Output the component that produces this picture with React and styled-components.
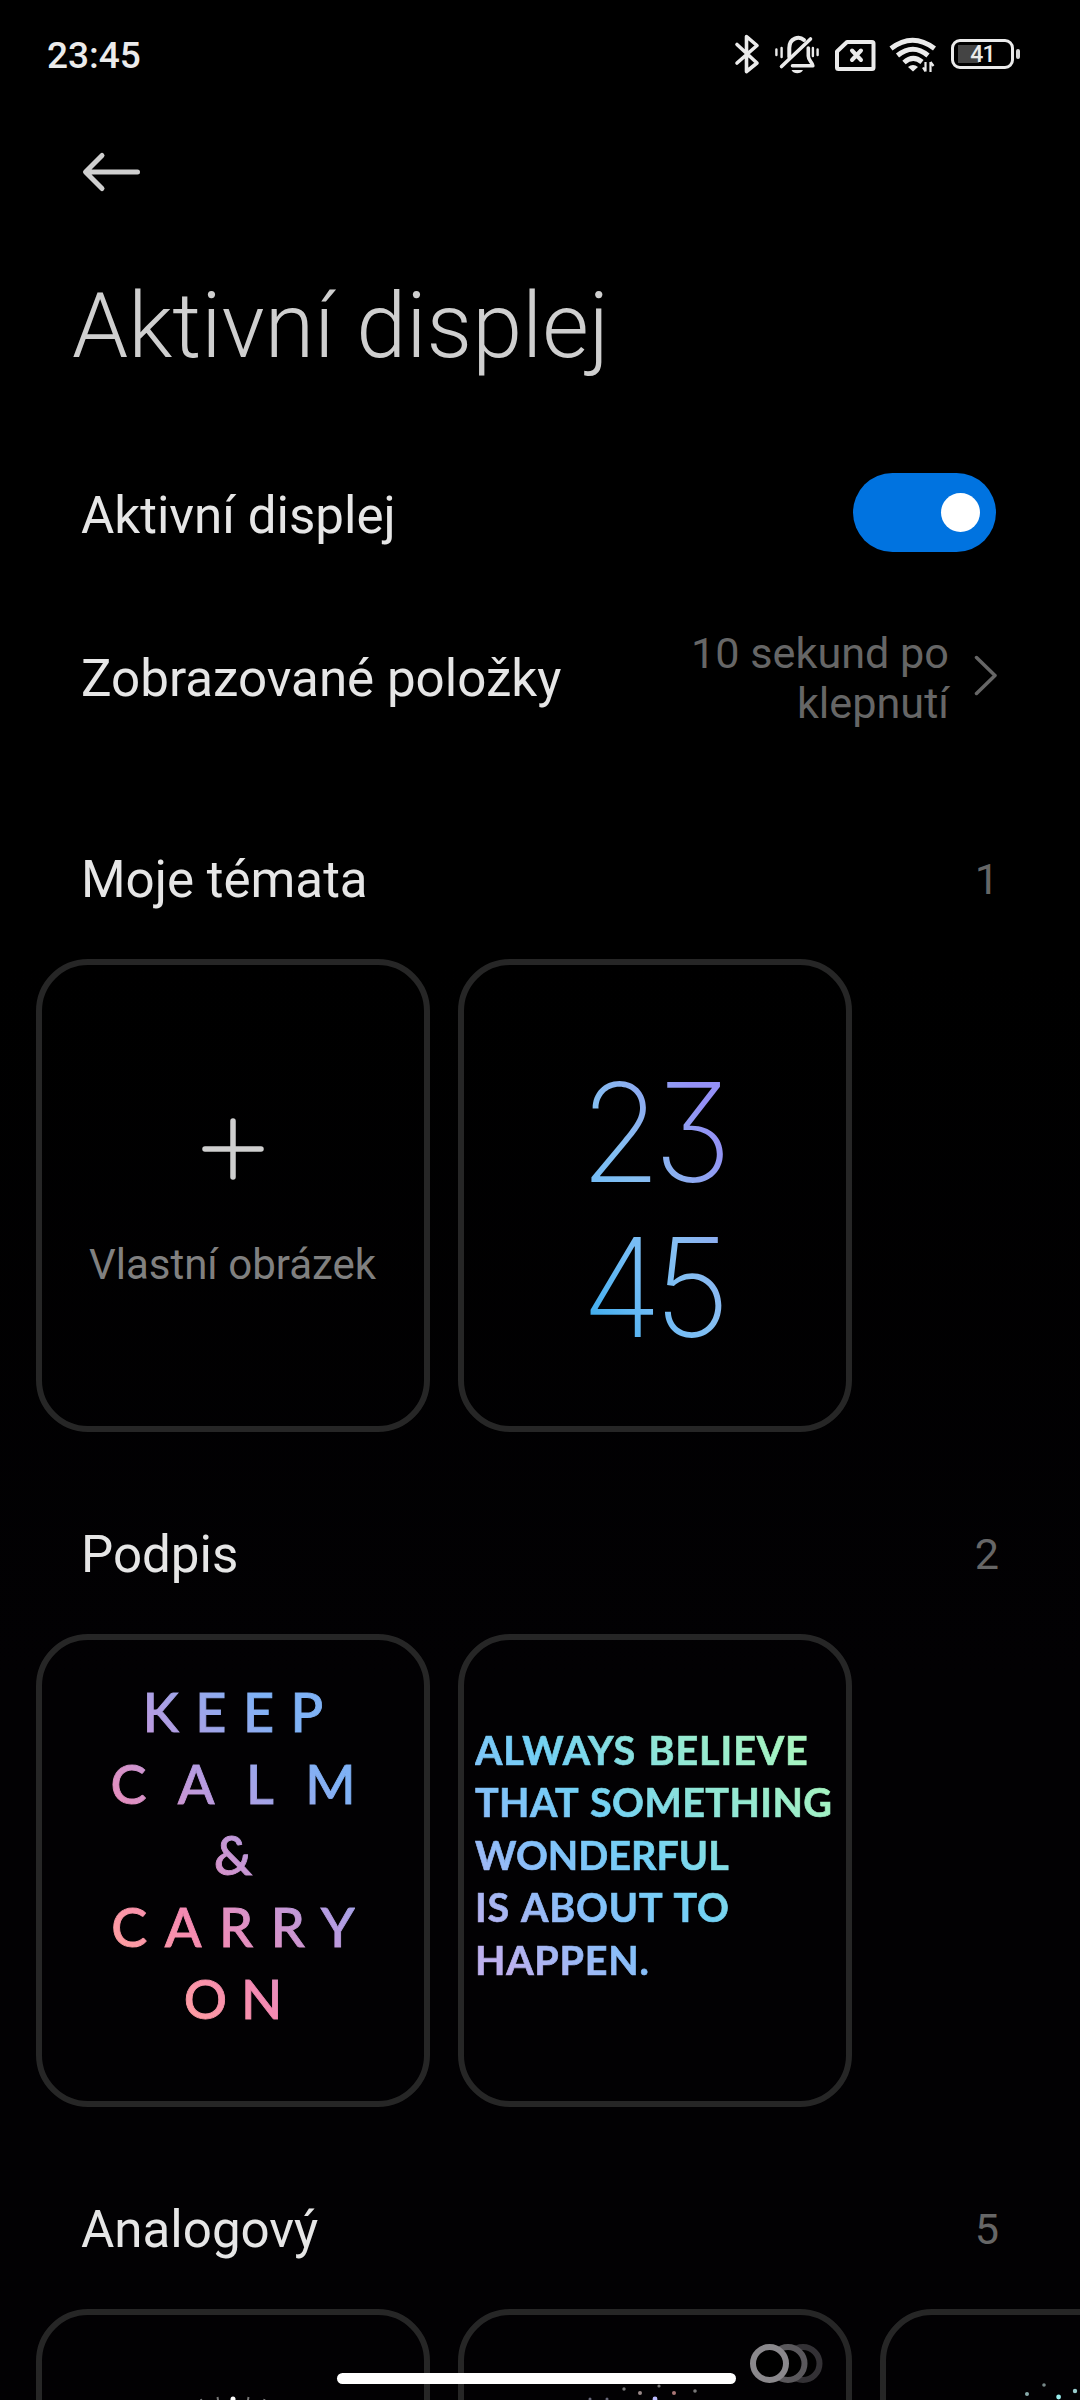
import React from 'react';
import styled, { createGlobalStyle, css } from 'styled-components';

const GlobalStyle = createGlobalStyle`
  body {
    margin: 0;
    background: #000;
    font-family: Roboto, 'Liberation Sans', sans-serif;
  }
`;

const Screen = styled.div`
  position: relative;
  width: 1080px;
  height: 2400px;
  overflow: hidden;
  background: linear-gradient(#000 40%, #020103 70%);
  color: #e6e6e6;
`;

const StatusBar = styled.div`
  display: flex;
  align-items: center;
  justify-content: space-between;
  height: 108px;
  padding: 0 60px 0 47px;
  box-sizing: border-box;
`;

const Clock = styled.div`
  padding-top: 3px;
  font-size: 37px;
  font-weight: 500;
  color: #ebebeb;
`;

const StatusIcons = styled.div`
  display: flex;
  align-items: center;

  svg {
    display: block;
  }
`;

const Battery = styled.div`
  display: flex;
  align-items: center;
  margin-left: 15px;
`;

const BatteryBody = styled.div`
  display: flex;
  align-items: center;
  justify-content: center;
  width: 63px;
  height: 30px;
  box-sizing: border-box;
  border: 3px solid #ebebeb;
  border-radius: 9px;
  background: linear-gradient(#444, #444) 4px 3px / 21px 18px no-repeat;
  color: #ebebeb;
  font-size: 23px;
  font-weight: 500;
  letter-spacing: -0.8px;
  line-height: 26px;
  padding-top: 2px;
`;

const BatteryTip = styled.div`
  width: 4px;
  height: 10px;
  margin-left: 2px;
  border-radius: 2px;
  background: #d8d8d8;
`;

const NavBar = styled.div`
  display: flex;
  align-items: center;
  height: 128px;
  padding-left: 80px;
`;

const Title = styled.h1`
  margin: 0;
  padding-left: 72px;
  font-size: 90px;
  font-weight: 300;
  line-height: 182px;
  color: #cfcfcf;
`;

const Row = styled.div`
  display: flex;
  align-items: center;
  justify-content: space-between;
  height: ${props => props.height}px;
  padding: 0 ${props => props.end || 84}px 0 81px;
`;

const Label = styled.div`
  font-size: 51.1px;
  line-height: 60px;
  padding-top: ${props => props.drop || 1}px;
`;

const Switch = styled.div`
  display: flex;
  align-items: center;
  justify-content: flex-end;
  width: 143px;
  height: 79px;
  padding-right: 16px;
  box-sizing: border-box;
  border-radius: 40px;
  background: #0073e0;
`;

const Knob = styled.div`
  width: 39px;
  height: 39px;
  border-radius: 50%;
  background: #fff;
`;

const Value = styled.div`
  display: flex;
  align-items: center;
  gap: 22px;
  color: #666;
  font-size: 43.2px;
  line-height: 50px;
  text-align: right;
`;

const ValueText = styled.div`
  width: 270px;
  padding-top: 2px;
`;

const Sections = styled.div`
  padding-top: 51px;
`;

const SectionBlock = styled.section`
  height: 675px;
`;

const SectionHeader = styled.div`
  display: flex;
  align-items: center;
  justify-content: space-between;
  height: 160px;
  padding: 0 81px;
`;

const Count = styled.div`
  padding-top: 1px;
  font-size: 43.2px;
  color: #666;
`;

const Cards = styled.div`
  display: flex;
  gap: 28px;
  padding-left: 36px;
`;

const Card = styled.div`
  display: flex;
  flex-direction: column;
  flex-shrink: 0;
  width: 394px;
  height: 473px;
  box-sizing: border-box;
  border: 6px solid #262626;
  border-radius: 52px;
  overflow: hidden;
`;

const AddContent = styled.div`
  display: flex;
  flex-direction: column;
  align-items: center;
  padding: 152px 1px 0 0;
`;

const AddLabel = styled.div`
  margin-top: 59px;
  font-size: 42px;
  line-height: 50px;
  color: #808080;
`;

const gradientText = css`
  background-clip: text;
  -webkit-background-clip: text;
  color: transparent;
`;

const DigitalClock = styled.div`
  ${gradientText}
  width: 200px;
  margin: 90px auto 0 88px;
  background-image: linear-gradient(60deg, #42aeee 17%, #72bcf6 36%, #85bff2 50%, #8cb0f0 62%, #9490f6 80%);
  font-family: Inter, sans-serif;
  font-feature-settings: 'cv09' 1;
  font-size: 137px;
  font-weight: 200;
  letter-spacing: -8px;
  line-height: 155px;
  text-align: center;
  transform: scaleX(0.96);
`;

const KeepCalm = styled.div`
  ${gradientText}
  display: flex;
  flex-direction: column;
  align-items: center;
  width: 244px;
  margin: 36px auto 0;
  background-image: linear-gradient(48deg, #ff9fa0 14%, #f58ab2 32%, #b89be0 56%, #7fb2f6 80%);
  font-family: Lato, sans-serif;
  font-size: 54px;
  font-weight: 500;
  line-height: 71.7px;
  -webkit-text-stroke: 0.9px transparent;
`;

const SpacedLine = styled.div`
  letter-spacing: ${props => props.spacing}px;
  margin-right: -${props => props.spacing}px;
  white-space: nowrap;
`;

const Quote = styled.div`
  ${gradientText}
  width: 362px;
  margin: 84px 0 0 11px;
  background-image: linear-gradient(45deg, #bdb0ee 8%, #86bffa 30%, #72d0f5 48%, #90e6d6 68%, #a8f5c0 90%);
  font-family: Lato, sans-serif;
  font-size: 39.5px;
  font-weight: 700;
  line-height: 52.4px;
  word-spacing: 2px;
  white-space: nowrap;
  -webkit-text-stroke: 0.7px transparent;
`;

const QuoteLine = styled.div`
  letter-spacing: ${props => props.spacing}px;
`;

const Drawing = styled.svg`
  display: block;
  width: 382px;
  height: 461px;
`;

const HomeBar = styled.div`
  position: absolute;
  left: 337px;
  top: 2373px;
  width: 399px;
  height: 11px;
  border-radius: 6px;
  background: #fff;
`;

const Rings = styled.svg`
  position: absolute;
  left: 748px;
  top: 2341px;
`;

const calmLines = [
  { text: 'KEEP', spacing: 16.4 },
  { text: 'CALM', spacing: 31.4 },
  { text: '&', spacing: 0 },
  { text: 'CARRY', spacing: 17.5 },
  { text: 'ON', spacing: 14 },
];

const quoteLines = [
  { text: 'ALWAYS BELIEVE', spacing: 0.9 },
  { text: 'THAT SOMETHING', spacing: 0.42 },
  { text: 'WONDERFUL', spacing: 0 },
  { text: 'IS ABOUT TO', spacing: 0.8 },
  { text: 'HAPPEN.', spacing: 0.75 },
];

// [x, y, radius, colour]
const purpleStars = [
  [126, 84, 1.5, '#667'],
  [143, 84, 1.5, '#667'],
  [160, 74, 1.7, '#777'],
  [176, 78, 2, '#988'],
  [191, 84, 2.4, '#bbf'],
  [195, 71, 1.6, '#777'],
  [210, 78, 2, '#a77'],
  [231, 76, 1.8, '#777'],
];

const tealStars = [
  [141, 79, 2, '#8aa'],
  [158, 70, 1.8, '#788'],
  [172.6, 82, 2.4, '#9ee'],
  [189, 76, 2.2, '#9cc'],
];

function Stars({ stars }) {
  return (
    <Drawing viewBox="0 0 382 461">
      {stars.map(([x, y, r, color]) => (
        <circle key={`${x}-${y}`} cx={x} cy={y} r={r} fill={color} />
      ))}
    </Drawing>
  );
}

function DialFace() {
  return (
    <Drawing viewBox="0 0 382 461">
      <g stroke="#777" strokeWidth="2">
        <path d="M159 84l1 4M175.500 82l1 6M206.500 82l-1 6M222.500 84l-1 4" />
      </g>
      <path d="M191 84v16" stroke="#fff" strokeWidth="5" strokeLinecap="round" />
    </Drawing>
  );
}

function Icons() {
  return (
    <StatusIcons>
      <svg width="42" height="48" viewBox="0 0 42 48" fill="none" stroke="#ebebeb" strokeWidth="3.6" strokeLinejoin="round" strokeLinecap="round">
        <path d="M7 14.500L27 33 16.500 41.500V6.500L27 15.500 7 33" />
      </svg>
      <svg width="54" height="48" viewBox="0 0 54 48" fill="none" stroke="#ebebeb" strokeLinecap="round">
        <path d="M9.500 36.500L38.500 9" strokeWidth="3.600" />
        <path d="M17.300 27V18C17.300 8 27 5.500 32 10" strokeWidth="4" />
        <path d="M36.300 18v8c0 4.500 4 6 4.500 9.700H20.500" strokeWidth="3.600" strokeLinejoin="round" />
        <path d="M4.400 19.500v5.500M9.600 18v9M40.900 18v8M45.600 19.500v5.500" strokeWidth="2.400" />
        <path d="M19.500 40h11.500c-2 4.300-9.500 4.300-11.500 0z" fill="#ebebeb" stroke="none" />
      </svg>
      <svg width="60" height="48" viewBox="0 0 60 48" fill="none" stroke="#ebebeb" strokeLinejoin="round">
        <path d="M21 12H46Q47.500 12 47.500 13.500V37.500Q47.500 39 46 39H12.500Q11 39 11 37.500V21.500z" strokeWidth="4" />
        <path d="M26 20.500L35 30M35 20.500L26 30" strokeWidth="4" strokeLinecap="round" />
      </svg>
      <svg width="50" height="48" viewBox="0 0 50 48" fill="none" stroke="#ebebeb" strokeWidth="5">
        <path d="M5 18.500Q26.500 2 48.500 18.500" />
        <path d="M11.500 25.500Q27 13 42 25.500" />
        <path d="M18 32.500Q27 24.500 36 32" />
        <path d="M22 37Q27 33 32 37L27 41.500z" fill="#ebebeb" stroke="none" />
        <path d="M39.500 32v9.500M37 37.500l2.500 4M44.500 42V32M44.500 32l3 4" strokeWidth="2.200" />
      </svg>
      <Battery>
        <BatteryBody>41</BatteryBody>
        <BatteryTip />
      </Battery>
    </StatusIcons>
  );
}

function Section({ title, count, children }) {
  return (
    <SectionBlock>
      <SectionHeader>
        <Label>{title}</Label>
        <Count>{count}</Count>
      </SectionHeader>
      <Cards>{children}</Cards>
    </SectionBlock>
  );
}

function App() {
  return (
    <Screen>
      <GlobalStyle />
      <StatusBar>
        <Clock>23:45</Clock>
        <Icons />
      </StatusBar>
      <NavBar>
        <svg width="64" height="48" viewBox="0 0 64 48" fill="none" stroke="#cfcfcf" strokeWidth="5" strokeLinecap="round" strokeLinejoin="round">
          <path d="M57.500 24H6M22 7.500L5.500 24 22 40.500" />
        </svg>
      </NavBar>
      <Title>Aktivní displej</Title>
      <Row height={189}>
        <Label drop={6}>Aktivní displej</Label>
        <Switch>
          <Knob />
        </Switch>
      </Row>
      <Row height={141} end={83}>
        <Label drop={2}>Zobrazované položky</Label>
        <Value>
          <ValueText>10 sekund po klepnutí</ValueText>
          <svg width="26" height="46" viewBox="0 0 26 46" fill="none" stroke="#666" strokeWidth="3.500" strokeLinecap="round" strokeLinejoin="round">
            <path d="M5.500 2.500L24 20.500 5.500 38.500" />
          </svg>
        </Value>
      </Row>
      <Sections>
        <Section title="Moje témata" count={1}>
          <Card>
            <AddContent>
              <svg width="64" height="64" viewBox="0 0 64 64" fill="none" stroke="#cfcfcf" strokeWidth="5.500" strokeLinecap="round">
                <path d="M32 4v56M4 32h56" />
              </svg>
              <AddLabel>Vlastní obrázek</AddLabel>
            </AddContent>
          </Card>
          <Card>
            <DigitalClock>
              23
              <br />
              45
            </DigitalClock>
          </Card>
        </Section>
        <Section title="Podpis" count={2}>
          <Card>
            <KeepCalm>
              {calmLines.map(line => (
                <SpacedLine key={line.text} spacing={line.spacing}>
                  {line.text}
                </SpacedLine>
              ))}
            </KeepCalm>
          </Card>
          <Card>
            <Quote>
              {quoteLines.map(line => (
                <QuoteLine key={line.text} spacing={line.spacing}>
                  {line.text}
                </QuoteLine>
              ))}
            </Quote>
          </Card>
        </Section>
        <Section title="Analogový" count={5}>
          <Card>
            <DialFace />
          </Card>
          <Card>
            <Stars stars={purpleStars} />
          </Card>
          <Card>
            <Stars stars={tealStars} />
          </Card>
        </Section>
      </Sections>
      <HomeBar />
      <Rings width="78" height="46" viewBox="0 0 78 46" fill="#000" strokeWidth="6">
        <circle cx="55" cy="22.500" r="16.500" stroke="#333135" />
        <circle cx="40" cy="22.500" r="16.500" stroke="#5a585c" />
        <circle cx="21.500" cy="22.500" r="16.500" stroke="#8a888c" />
      </Rings>
    </Screen>
  );
}

export default App;
